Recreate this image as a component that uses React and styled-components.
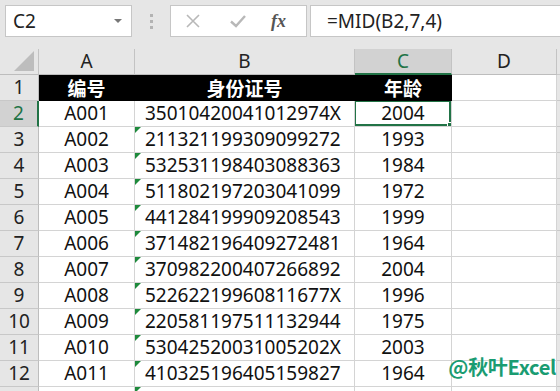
import React from 'react';
import styled, { createGlobalStyle, css } from 'styled-components';

const GlobalStyle = createGlobalStyle`
  html, body {
    margin: 0;
    padding: 0;
    background: #e6e6e6;
    overflow: hidden;
  }
  body {
    font-family: "Noto Sans", "Noto Sans CJK SC", sans-serif;
  }
`;

const GREEN = '#217346';
const GRID = '#d4d4d4';

const Page = styled.div`
  position: relative;
  width: 560px;
  height: 391px;
  overflow: hidden;
`;

const TopBar = styled.div`
  display: flex;
  align-items: flex-start;
  height: 49px;
  padding: 5px 0 0 5px;
  box-sizing: border-box;
`;

const NameBox = styled.div`
  width: 127px;
  height: 32px;
  box-sizing: border-box;
  background: #fff;
  border: 1px solid #c6c6c6;
  display: flex;
  align-items: center;
  justify-content: space-between;
  padding: 0 9px 0 7px;
  font-size: 19px;
  color: #222;
`;

const DropArrow = styled.span`
  width: 0;
  height: 0;
  border-left: 4px solid transparent;
  border-right: 4px solid transparent;
  border-top: 4px solid #777;
`;

const Grip = styled.div`
  width: 38px;
  height: 32px;
  display: flex;
  flex-direction: column;
  align-items: center;
  justify-content: center;
  gap: 3px;
  span {
    width: 3px;
    height: 3px;
    background: #b3b3b3;
  }
`;

const IconBox = styled.div`
  width: 137px;
  height: 32px;
  box-sizing: border-box;
  background: #fff;
  border: 1px solid #c6c6c6;
  display: flex;
  align-items: center;
  padding-left: 14px;
  gap: 28px;
`;

const Fx = styled.span`
  font-family: "Liberation Serif", serif;
  font-style: italic;
  font-size: 18px;
  color: #555;
  font-weight: bold;
  margin-left: -4px;
`;

const FormulaBox = styled.div`
  flex: 1;
  margin-left: 3px;
  height: 32px;
  box-sizing: border-box;
  background: #fff;
  border: 1px solid #c6c6c6;
  border-right: none;
  display: flex;
  align-items: center;
  padding-left: 16px;
  font-size: 19px;
  color: #222;
`;

const Sheet = styled.div`
  display: grid;
  grid-template-columns: 39px 96px 220px 97px 105px 3px;
  grid-auto-rows: 26px;
`;

const cellBase = css`
  box-sizing: border-box;
  display: flex;
  align-items: center;
  font-size: 19px;
  line-height: 1;
  overflow: hidden;
  white-space: nowrap;
`;

const ColHead = styled.div`
  ${cellBase};
  justify-content: center;
  background: ${p => (p.$active ? '#d2d2d2' : '#e6e6e6')};
  border-right: 1px solid #c3c3c3;
  border-bottom: ${p => (p.$active ? `2px solid ${GREEN}` : '1px solid #bdbdbd')};
  color: ${p => (p.$active ? GREEN : '#222')};
  position: relative;
`;

const Corner = styled(ColHead)`
  svg {
    position: absolute;
    right: 4px;
    bottom: 3px;
  }
`;

const RowHead = styled.div`
  ${cellBase};
  justify-content: center;
  background: ${p => (p.$active ? '#d2d2d2' : '#e6e6e6')};
  border-right: ${p => (p.$active ? `2px solid ${GREEN}` : '1px solid #bdbdbd')};
  border-bottom: 1px solid #c8c8c8;
  color: ${p => (p.$active ? GREEN : '#222')};
`;

const Cell = styled.div`
  ${cellBase};
  position: relative;
  background: ${p => (p.$head ? '#000' : '#fff')};
  color: ${p => (p.$head ? '#fff' : '#111')};
  font-weight: ${p => (p.$head ? 'bold' : 'normal')};
  font-family: ${p => (p.$head ? '"Noto Sans CJK SC", sans-serif' : 'inherit')};
  justify-content: ${p => (p.$left ? 'flex-start' : 'center')};
  padding-left: ${p => (p.$left ? '10px' : '0')};
  border-right: 1px solid ${p => (p.$head ? '#000' : GRID)};
  border-bottom: 1px solid ${p => (p.$head ? '#000' : GRID)};

  ${p => p.$flag && css`
    &::before {
      content: '';
      position: absolute;
      left: 0;
      top: 0;
      border-top: 6px solid #1e8a3c;
      border-right: 6px solid transparent;
    }
  `}

  ${p => p.$selected && css`
    &::after {
      content: '';
      position: absolute;
      left: -1px;
      top: -1px;
      right: 0;
      bottom: 0;
      border: 2px solid ${GREEN};
    }
  `}
`;

const Handle = styled.span`
  position: absolute;
  right: -4px;
  bottom: -4px;
  width: 6px;
  height: 6px;
  background: ${GREEN};
  border: 1px solid #fff;
  z-index: 2;
`;

const Filler = styled.div`
  background: #e6e6e6;
  border-bottom: 1px solid #c8c8c8;
`;

const Watermark = styled.div`
  position: absolute;
  right: 4px;
  bottom: 10px;
  font-family: "Noto Sans CJK SC", sans-serif;
  font-weight: bold;
  font-size: 20px;
  color: #1a9c72;
  letter-spacing: -0.3px;
`;

const rows = [
  ['A001', '35010420041012974X', '2004'],
  ['A002', '211321199309099272', '1993'],
  ['A003', '532531198403088363', '1984'],
  ['A004', '511802197203041099', '1972'],
  ['A005', '441284199909208543', '1999'],
  ['A006', '371482196409272481', '1964'],
  ['A007', '370982200407266892', '2004'],
  ['A008', '52262219960811677X', '1996'],
  ['A009', '220581197511132944', '1975'],
  ['A010', '53042520031005202X', '2003'],
  ['A011', '410325196405159827', '1964'],
];

const CrossIcon = () => (
  <svg width="16" height="16" viewBox="0 0 16 16">
    <path d="M2 2 L14 14 M14 2 L2 14" stroke="#b8b8b8" strokeWidth="1.6" fill="none" />
  </svg>
);

const CheckIcon = () => (
  <svg width="18" height="16" viewBox="0 0 18 16">
    <path d="M2 8.5 L7 13 L16 3" stroke="#b8b8b8" strokeWidth="2.4" fill="none" />
  </svg>
);

export default function App() {
  return (
    <Page>
      <GlobalStyle />
      <TopBar>
        <NameBox>C2<DropArrow /></NameBox>
        <Grip><span /><span /><span /></Grip>
        <IconBox>
          <CrossIcon />
          <CheckIcon />
          <Fx>fx</Fx>
        </IconBox>
        <FormulaBox>=MID(B2,7,4)</FormulaBox>
      </TopBar>
      <Sheet>
        <Corner>
          <svg width="20" height="20" viewBox="0 0 20 20">
            <polygon points="20,0 20,20 0,20" fill="#bdbdbd" />
          </svg>
        </Corner>
        <ColHead>A</ColHead>
        <ColHead>B</ColHead>
        <ColHead $active>C</ColHead>
        <ColHead>D</ColHead>
        <Filler />

        <RowHead>1</RowHead>
        <Cell $head>编号</Cell>
        <Cell $head>身份证号</Cell>
        <Cell $head>年龄</Cell>
        <Cell />
        <Filler />

        {rows.map(([id, card, age], i) => {
          const n = i + 2;
          return (
            <React.Fragment key={n}>
              <RowHead $active={n === 2}>{n}</RowHead>
              <Cell>{id}</Cell>
              <Cell $left $flag={n > 2}>{card}</Cell>
              <Cell $selected={n === 2}>
                {age}
                {n === 2 && <Handle />}
              </Cell>
              <Cell />
              <Filler />
            </React.Fragment>
          );
        })}

        <RowHead />
        <Cell />
        <Cell $flag />
        <Cell />
        <Cell />
        <Filler />
      </Sheet>
      <Watermark>@秋叶Excel</Watermark>
    </Page>
  );
}
